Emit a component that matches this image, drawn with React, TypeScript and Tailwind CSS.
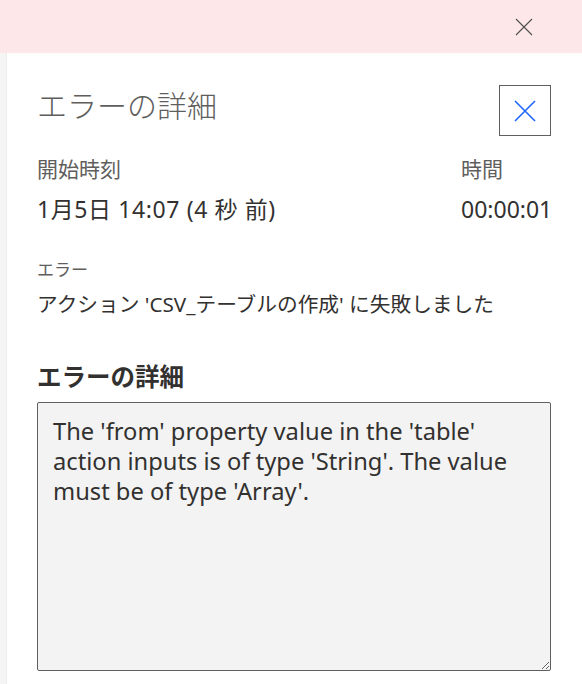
import React from "react";

const jp = { fontFamily: '"Segoe UI", "Noto Sans", "Noto Sans CJK JP", sans-serif' };

export default function App() {
  return (
    <div className="w-[582px] h-[684px] flex flex-col bg-white overflow-hidden" style={jp}>
      <div className="h-[53px] bg-[#fde7e9] flex items-center justify-end pr-[49px] shrink-0">
        <svg width="18" height="18" viewBox="0 0 18 18">
          <path d="M1 1 L17 17 M17 1 L1 17" stroke="#505050" strokeWidth="1.1" fill="none" />
        </svg>
      </div>
      <div className="flex flex-1 min-h-0">
        <div className="w-[7px] bg-[#f5f5f5] border-r border-[#ebebeb] shrink-0" />
        <div className="flex-1 pl-[30px] pr-[31px] flex flex-col">
          <div className="mt-[32px] h-[51px] flex items-start justify-between">
            <div className="mt-[5px] text-[30px] font-light text-[#605e5c] leading-[32px]">エラーの詳細</div>
            <button className="w-[52px] h-[51px] border border-[#5f5f5f] flex items-center justify-center bg-white">
              <svg width="22" height="22" viewBox="0 0 22 22">
                <path d="M1 1 L21 21 M21 1 L1 21" stroke="#1e66ff" strokeWidth="1.6" fill="none" />
              </svg>
            </button>
          </div>
          <div className="mt-[19px] flex justify-between">
            <div>
              <div className="text-[21px] leading-[28px] text-[#605e5c]">開始時刻</div>
              <div className="mt-[10px] text-[23px] tracking-[0.6px] leading-[32px] text-[#323130]">1月5日 14:07 (4 秒 前)</div>
            </div>
            <div className="w-[90px]">
              <div className="text-[21px] leading-[28px] text-[#605e5c]">時間</div>
              <div className="mt-[10px] text-[23px] leading-[32px] text-[#323130]">00:00:01</div>
            </div>
          </div>
          <div className="mt-[33px] text-[17px] leading-[24px] text-[#605e5c]">エラー</div>
          <div className="mt-[6px] text-[20.7px] leading-[32px] text-[#323130] whitespace-nowrap">アクション 'CSV_テーブルの作成' に失敗しました</div>
          <div className="mt-[41px] text-[24.5px] leading-[32px] font-bold text-[#323130]">エラーの詳細</div>
          <textarea
            readOnly
            className="mt-[9px] h-[269px] w-full bg-[#f3f3f3] border border-[#5f5f5f] rounded-[2px] pl-[15px] pr-[12px] pt-[13px] text-[23.7px] leading-[30px] text-[#323130] outline-none"
            style={jp}
            defaultValue="The 'from' property value in the 'table' action inputs is of type 'String'. The value must be of type 'Array'."
          />
        </div>
      </div>
    </div>
  );
}
